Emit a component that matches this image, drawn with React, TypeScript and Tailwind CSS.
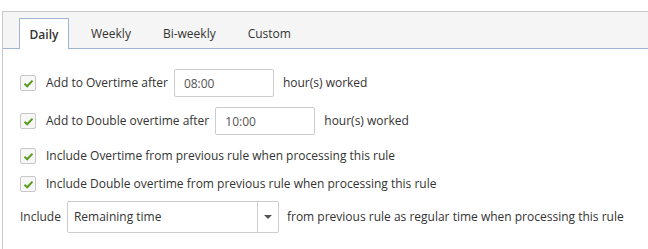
import { useState } from "react";

const tabs = ["Daily", "Weekly", "Bi-weekly", "Custom"];

function Check() {
  return (
    <span className="flex h-4 w-4 shrink-0 items-center justify-center rounded-[2px] border border-[#c8c8c8] bg-[#f7f7f7]">
      <svg width="11" height="9" viewBox="0 0 11 9">
        <path d="M1.5 4.8 L4.2 7.3 L9.5 1.6" fill="none" stroke="#5a9b1e" strokeWidth="2" />
      </svg>
    </span>
  );
}

function CheckRow({ children }: { children: React.ReactNode }) {
  return (
    <div className="flex items-center gap-[10px]">
      <Check />
      <div className="flex items-center">{children}</div>
    </div>
  );
}

const inputClass =
  "ml-[6px] h-[28px] w-[100px] rounded-[2px] border border-[#ccc] px-[9px] text-[#555] outline-none";

export default function App() {
  const [active, setActive] = useState("Daily");
  return (
    <div
      className="h-[249px] w-[648px] overflow-hidden bg-white pt-[11px] text-[12px] leading-[16px] text-[#333]"
      style={{ fontFamily: '"Open Sans", "Segoe UI", sans-serif' }}
    >
      <div className="ml-[2px] h-[238px] border-l border-[#c8c8c8]">
        <div className="flex h-[38px] items-end border-y border-t-[#c8c8c8] border-b-[#9fb4d2] bg-[#f5f5f5] pl-[16px]">
          {tabs.map((t) => (
            <button
              key={t}
              onClick={() => setActive(t)}
              className={
                t === active
                  ? "-mb-px mr-[6px] h-[31px] w-[50px] border border-b-0 border-[#9fb4d2] bg-white pt-[2px] font-semibold"
                  : "h-[30px] px-[16px] pt-[1px]"
              }
            >
              {t}
            </button>
          ))}
        </div>

        <div className="flex flex-col pl-[17px] pt-[20px]">
          <CheckRow>
            <span>Add to Overtime after</span>
            <input defaultValue="08:00" className={inputClass} />
            <span className="ml-[9px]">hour(s) worked</span>
          </CheckRow>
          <div className="mt-[10px]">
            <CheckRow>
              <span>Add to Double overtime after</span>
              <input defaultValue="10:00" className={inputClass} />
              <span className="ml-[9px]">hour(s) worked</span>
            </CheckRow>
          </div>
          <div className="mt-[13px]">
            <CheckRow>Include Overtime from previous rule when processing this rule</CheckRow>
          </div>
          <div className="mt-[12px]">
            <CheckRow>Include Double overtime from previous rule when processing this rule</CheckRow>
          </div>
          <div className="mt-[9px] flex items-center">
            <span>Include</span>
            <div className="ml-[6px] flex h-[32px] w-[212px] items-center rounded-[2px] border border-[#ccc] bg-white">
              <span className="flex-1 pl-[6px]">Remaining time</span>
              <span className="flex h-full w-[21px] items-center justify-center border-l border-[#ccc]">
                <svg width="8" height="4" viewBox="0 0 8 4">
                  <path d="M0 0 H8 L4 4 Z" fill="#555" />
                </svg>
              </span>
            </div>
            <span className="ml-[8px]">from previous rule as regular time when processing this rule</span>
          </div>
        </div>
      </div>
    </div>
  );
}
